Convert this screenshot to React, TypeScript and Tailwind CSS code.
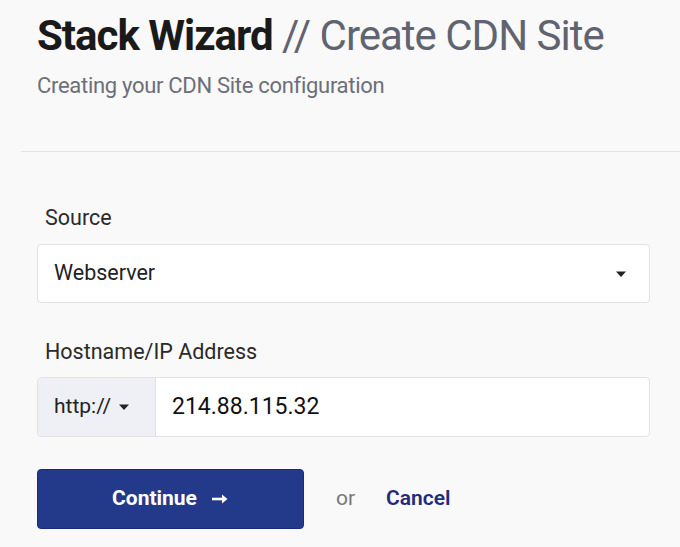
import React from "react";

function Caret({ className = "" }: { className?: string }) {
  return (
    <svg width="12" height="8" viewBox="0 0 12 8" className={className}>
      <path d="M1 1.5 L11 1.5 L6 7 Z" fill="#222" />
    </svg>
  );
}

export default function App() {
  return (
    <div
      className="w-[680px] h-[547px] bg-[#f9f9f9] overflow-hidden"
      style={{ fontFamily: "Roboto, 'Liberation Sans', sans-serif" }}
    >
      <div className="pl-[37px] pt-[12px]">
        <h1 className="text-[42px] leading-[48px] tracking-[-1px] whitespace-nowrap">
          <span className="font-bold text-[#1a1a1a]">Stack Wizard</span>
          <span className="text-[#5f6470] font-normal"> // Create CDN Site</span>
        </h1>
        <p className="mt-[13px] text-[22px] leading-[26px] text-[#6b6f78] tracking-[-0.3px]">
          Creating your CDN Site configuration
        </p>
      </div>
      <div className="ml-[21px] mt-[52px] h-px bg-[#e3e3e3]" />
      <div className="pl-[37px] pr-[30px] pt-[53px]">
        <label className="block pl-[8px] text-[21.5px] leading-[26px] text-[#2a2a2a]">Source</label>
        <div className="mt-[13px] h-[59px] bg-white border border-[#e2e2e2] rounded-[4px] flex items-center justify-between pl-[16px] pr-[22px]">
          <span className="text-[21.5px] text-[#222]">Webserver</span>
          <Caret />
        </div>
        <label className="block mt-[36px] pl-[8px] text-[21.5px] leading-[26px] text-[#2a2a2a]">
          Hostname/IP Address
        </label>
        <div className="mt-[12px] h-[60px] bg-white border border-[#e2e2e2] rounded-[4px] flex overflow-hidden">
          <div className="w-[118px] bg-[#eef0f5] border-r border-[#e2e2e2] flex items-center pl-[16px] gap-[7px]">
            <span className="text-[21px] text-[#222]">http://</span>
            <Caret />
          </div>
          <div className="flex items-center pl-[16px]">
            <span className="text-[23px] text-[#111]">214.88.115.32</span>
          </div>
        </div>
        <div className="mt-[32px] flex items-center">
          <button className="w-[267px] h-[60px] rounded-[4px] bg-[#233a8b] border border-[#1a2a80] text-white font-bold text-[21px] flex items-center justify-center gap-[14px]">
            Continue
            <svg width="18" height="12" viewBox="0 0 18 12">
              <path d="M1 6 H13" stroke="white" strokeWidth="2.6" />
              <path d="M11 1.5 L16.5 6 L11 10.5 Z" fill="white" />
            </svg>
          </button>
          <span className="ml-[32px] text-[21px] text-[#777]">or</span>
          <span className="ml-[31px] text-[21px] font-semibold text-[#1f2c7c]">Cancel</span>
        </div>
      </div>
    </div>
  );
}
